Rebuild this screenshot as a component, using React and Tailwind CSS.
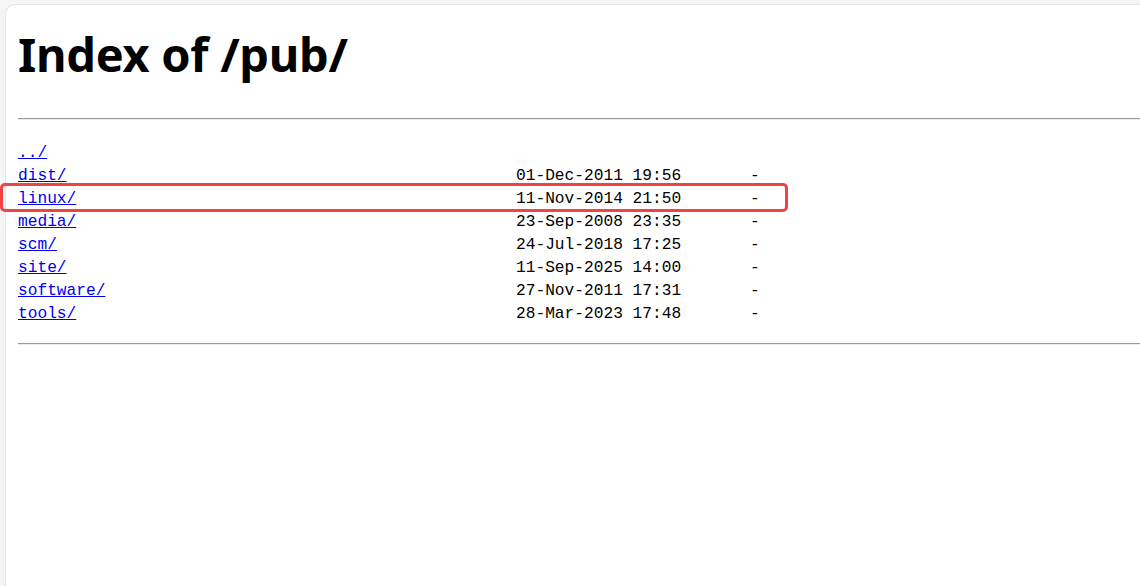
import React from "react";

const rows = [
  { name: "dist/", date: "01-Dec-2011 19:56" },
  { name: "linux/", date: "11-Nov-2014 21:50" },
  { name: "media/", date: "23-Sep-2008 23:35" },
  { name: "scm/", date: "24-Jul-2018 17:25" },
  { name: "site/", date: "11-Sep-2025 14:00" },
  { name: "software/", date: "27-Nov-2011 17:31" },
  { name: "tools/", date: "28-Mar-2023 17:48" },
];

function App() {
  return (
    <div className="relative w-full h-[586px] overflow-hidden bg-[#f5f5f5] pt-[4px] pl-[5px]">
      <div className="h-full bg-white rounded-tl-[10px] border-l border-t border-[#e4e4e4] pt-[20px] pl-[12px]">
        <h1
          className="text-[47px] leading-[58px] font-bold tracking-[-0.3px] text-black"
          style={{ fontFamily: '"Noto Sans", sans-serif' }}
        >
          Index of /pub/
        </h1>

        <div className="mt-[35px] border-t border-[#9a9a9a] border-b-[1px] border-b-[#ececec]" />

        <div
          className="mt-[22px] text-[16.2px] leading-[23px] text-black"
          style={{ fontFamily: '"Liberation Mono", monospace' }}
        >
          <div>
            <a href="#" className="text-[#0000ee] underline">
              ../
            </a>
          </div>
          {rows.map((r) => (
            <div key={r.name} className="flex">
              <div className="w-[498px]">
                <a href="#" className="text-[#0000ee] underline">
                  {r.name}
                </a>
              </div>
              <div className="w-[234px]">{r.date}</div>
              <div>-</div>
            </div>
          ))}
        </div>

        <div className="mt-[17px] border-t border-[#9a9a9a] border-b-[1px] border-b-[#ececec]" />
      </div>

      <div className="absolute left-0 top-[183px] w-[788px] h-[29px] border-[3px] border-[#f04444] rounded-[5px]" />
    </div>
  );
}

export default App;
